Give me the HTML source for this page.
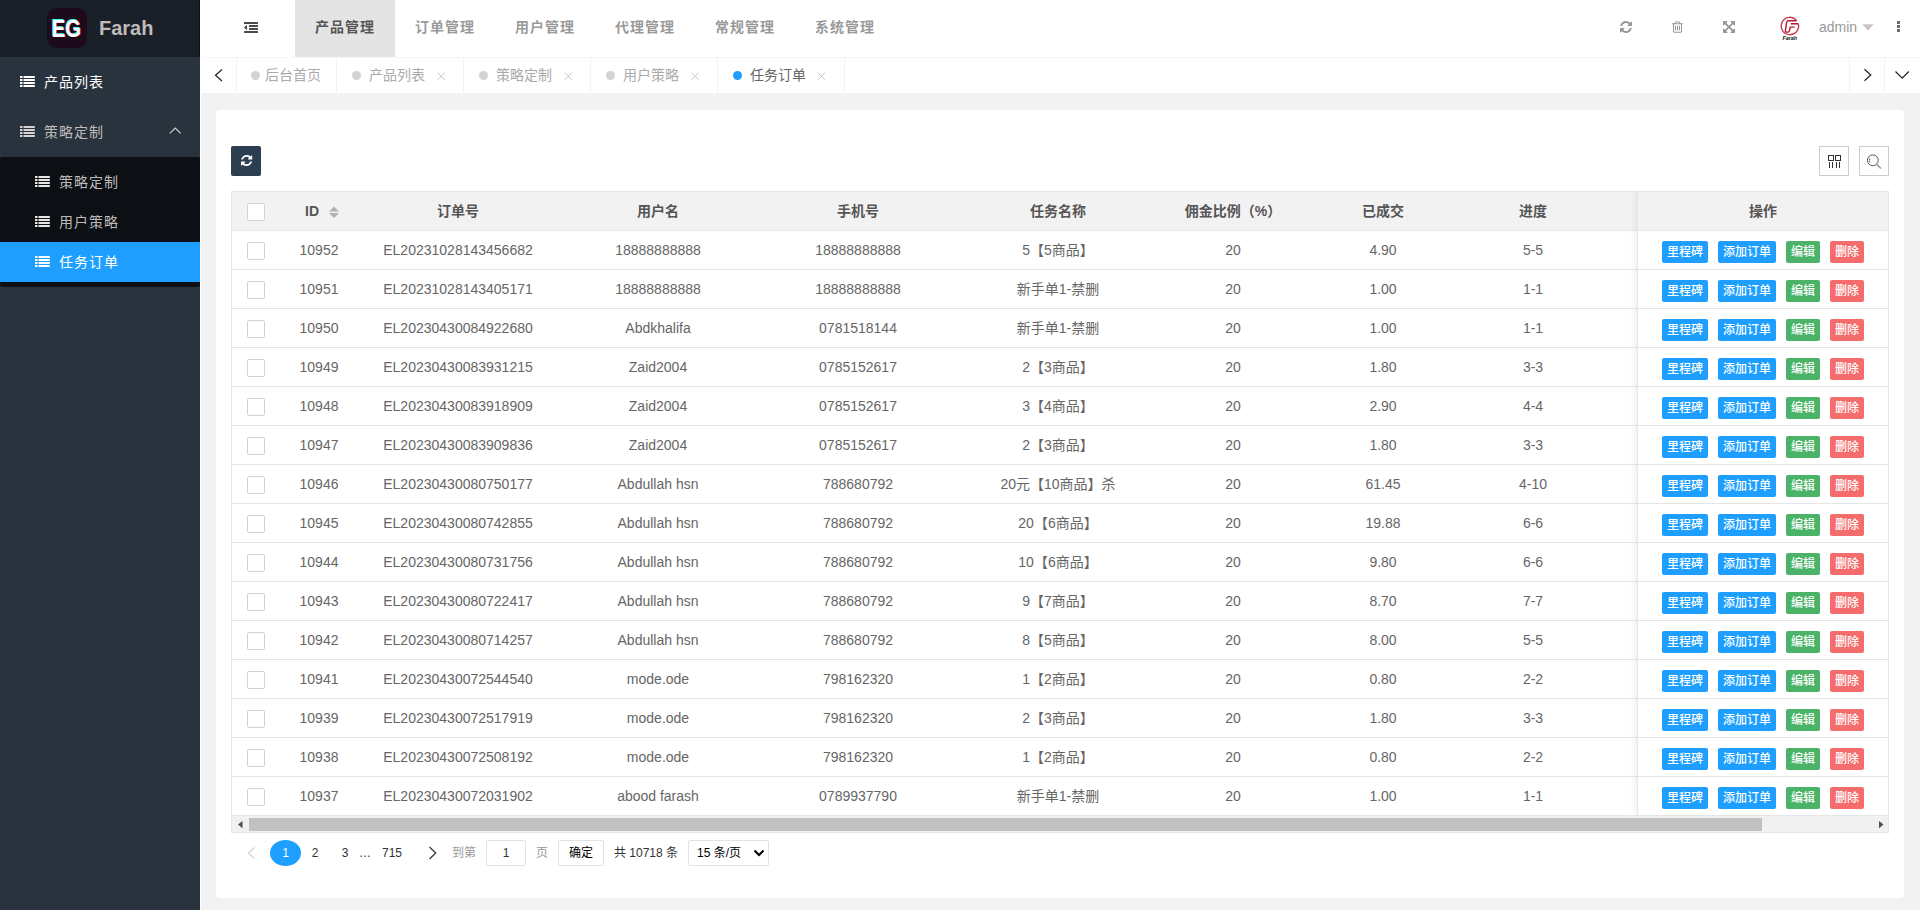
<!DOCTYPE html>
<html lang="zh-CN">
<head>
<meta charset="utf-8">
<title>Farah</title>
<style>
*{box-sizing:border-box}
html,body{margin:0;padding:0}
body{width:1920px;height:910px;overflow:hidden;background:#f2f2f2;font:14px/1 "Liberation Sans","Noto Sans CJK SC",sans-serif;color:#666;position:relative}
a{text-decoration:none;color:inherit}
.abs{position:absolute}
/* sidebar */
#side{position:absolute;left:0;top:0;width:200px;height:910px;background:#28333e;z-index:5}
#side:after{content:"";position:absolute;right:0;top:0;width:1px;height:57px;background:rgba(0,0,0,.45);z-index:9}
#strip{position:absolute;left:200px;top:0;width:1px;height:910px;background:#fff;z-index:4}
#logo{position:absolute;left:0;top:0;width:200px;height:57px;background:#192027}
#logo .img{position:absolute;left:47px;top:8px;width:40px;height:40px;border-radius:9px;background:#1d0b1c}
#logo .tt{position:absolute;left:99px;top:16px;font-size:20px;font-weight:bold;color:#bfbbbb;line-height:24px}
.mi{position:absolute;left:0;width:200px;color:#bfbbbb;font-size:14px;letter-spacing:1px}
.mi .t{position:absolute;top:0}
.ico-list{position:absolute;width:14px;height:10px}
.ico-list i{position:absolute;left:0;width:14px;height:2px;background:currentColor}
#child{position:absolute;left:0;top:157px;width:200px;height:130px;background:#0c0f13;border-radius:2px}
#act{position:absolute;left:0;top:242px;width:200px;height:40px;background:#1e9fff}
/* header */
#hd{position:absolute;left:200px;top:0;width:1720px;height:57px;background:#fff}
#hd .nav{position:absolute;top:0;height:57px;width:100px;text-align:center;line-height:55px;font-size:14px;letter-spacing:1px;font-weight:bold;color:rgba(107,107,107,.7)}
#hd .nav.on{background:#e4e4e4;color:#565656}
/* tabs */
#tb{position:absolute;left:201px;top:57px;width:1719px;height:36px;background:#fff;border-top:1px solid #f6f6f6}
#tb .sep{position:absolute;top:0;width:1px;height:35px;background:#f2f2f2}
#tb .tab{position:absolute;top:0;height:35px;line-height:35px;color:#aaa;font-size:14px;white-space:nowrap}
#tb .dot{position:absolute;top:13px;width:9px;height:9px;border-radius:50%;background:#d3d3d3}
#tb .tx{position:absolute;top:0}
/* card */
#card{position:absolute;left:216px;top:110px;width:1688px;height:788px;background:#fff;border-radius:4px}
#rf{position:absolute;left:15px;top:36px;width:30px;height:30px;background:#2d3e50;border-radius:2px}
.tbtn{position:absolute;top:36px;width:30px;height:30px;border:1px solid #ccc;background:#fff}
/* table */
#tbl{position:absolute;left:15px;top:81px;width:1658px;height:642px;border:1px solid #e6e6e6;overflow:hidden}
#th{position:absolute;left:0;top:0;width:1656px;height:39px;background:#f2f2f2;border-bottom:1px solid #e6e6e6;font-weight:bold;color:#555}
.tr{position:absolute;left:0;width:1656px;height:39px;border-bottom:1px solid #e6e6e6;color:#666}
.c{position:absolute;top:0;height:38px;line-height:38px;text-align:center;white-space:nowrap}
.c0{left:0;width:48px}
.c1{left:48px;width:78px}
.c2{left:126px;width:200px}
.c3{left:326px;width:200px}
.c4{left:526px;width:200px}
.c5{left:726px;width:200px}
.c6{left:926px;width:150px}
.c7{left:1076px;width:150px}
.c8{left:1226px;width:150px}
.cb{position:absolute;left:15px;top:11px;width:18px;height:18px;border:1px solid #d2d2d2;border-radius:2px;background:#fff}
.op{position:absolute;left:1405px;top:0;width:251px;height:38px;border-left:1px solid #e6e6e6;background:#fff;padding:10px 0 0 24px;font-size:0;white-space:nowrap}
.b{display:inline-block;height:22px;line-height:23.5px;overflow:hidden;font-weight:500;padding:0 5px;font-size:12px;color:#fff;border-radius:2px;margin-right:10px;vertical-align:top;letter-spacing:0}
.bn{background:#1e9fff}.bs{background:#4bb368}.bd{background:#f56c6c}
#fx{position:absolute;left:1405px;top:0;width:251px;height:624px;box-shadow:-1px 0 8px rgba(0,0,0,.08);pointer-events:none}
#sb{position:absolute;left:0;top:624px;width:1656px;height:16px;background:#f1f1f1}
#sb .thumb{position:absolute;left:17px;top:2px;width:1513px;height:13px;background:#c1c1c1}
/* pager */
#pg{position:absolute;left:15px;top:722px;height:42px;width:900px;font-size:12px;color:#333}
#pg span,#pg a{position:absolute;top:8px;height:26px;line-height:26px;white-space:nowrap}
svg{position:absolute;overflow:visible}
.lst{left:0;top:0}
</style>
</head>
<body>
<div id="side">
  <div id="logo"><div class="img"><svg style="left:0;top:0" width="40" height="40" viewBox="0 0 40 40" font-family="Liberation Sans, sans-serif" font-weight="bold" font-size="24.200px"><g transform="translate(4.700,28.700) scale(0.840,1)"><text x="-0.700" y="-0.600" fill="#4ff">EG</text><text x="0.700" y="0.700" fill="#ff3b5c">EG</text><text x="0" y="0" fill="#fff">EG</text></g></svg></div><div class="tt">Farah</div></div>
  <div id="child"></div><div id="act"></div>
  <svg style="left:19.5px;top:76px" width="16" height="11" viewBox="0 0 16 11" fill="#fff"><rect x="0" y="0" width="2.5" height="2"/><rect x="3.5" y="0" width="11.3" height="2"/><rect x="0" y="3" width="2.5" height="2"/><rect x="3.5" y="3" width="11.3" height="2"/><rect x="0" y="6" width="2.5" height="2"/><rect x="3.5" y="6" width="11.3" height="2"/><rect x="0" y="9" width="2.5" height="2"/><rect x="3.5" y="9" width="11.3" height="2"/></svg><svg style="left:19.5px;top:126px" width="16" height="11" viewBox="0 0 16 11" fill="#d6d2d2"><rect x="0" y="0" width="2.5" height="2"/><rect x="3.5" y="0" width="11.3" height="2"/><rect x="0" y="3" width="2.5" height="2"/><rect x="3.5" y="3" width="11.3" height="2"/><rect x="0" y="6" width="2.5" height="2"/><rect x="3.5" y="6" width="11.3" height="2"/><rect x="0" y="9" width="2.5" height="2"/><rect x="3.5" y="9" width="11.3" height="2"/></svg><svg style="left:34.5px;top:176px" width="16" height="11" viewBox="0 0 16 11" fill="#e9e6e6"><rect x="0" y="0" width="2.5" height="2"/><rect x="3.5" y="0" width="11.3" height="2"/><rect x="0" y="3" width="2.5" height="2"/><rect x="3.5" y="3" width="11.3" height="2"/><rect x="0" y="6" width="2.5" height="2"/><rect x="3.5" y="6" width="11.3" height="2"/><rect x="0" y="9" width="2.5" height="2"/><rect x="3.5" y="9" width="11.3" height="2"/></svg><svg style="left:34.5px;top:216px" width="16" height="11" viewBox="0 0 16 11" fill="#e9e6e6"><rect x="0" y="0" width="2.5" height="2"/><rect x="3.5" y="0" width="11.3" height="2"/><rect x="0" y="3" width="2.5" height="2"/><rect x="3.5" y="3" width="11.3" height="2"/><rect x="0" y="6" width="2.5" height="2"/><rect x="3.5" y="6" width="11.3" height="2"/><rect x="0" y="9" width="2.5" height="2"/><rect x="3.5" y="9" width="11.3" height="2"/></svg><svg style="left:34.5px;top:256px" width="16" height="11" viewBox="0 0 16 11" fill="#fff"><rect x="0" y="0" width="2.5" height="2"/><rect x="3.5" y="0" width="11.3" height="2"/><rect x="0" y="3" width="2.5" height="2"/><rect x="3.5" y="3" width="11.3" height="2"/><rect x="0" y="6" width="2.5" height="2"/><rect x="3.5" y="6" width="11.3" height="2"/><rect x="0" y="9" width="2.5" height="2"/><rect x="3.5" y="9" width="11.3" height="2"/></svg><svg style="left:165px;top:120px" width="20" height="20" viewBox="165 120 20 20" fill="none" stroke="#d2cece" stroke-width="1.150"><polyline points="169.8,133.3 175.2,128 180.7,133.3"/></svg>
  <div class="mi" style="top:57px;height:50px;line-height:50px;color:#fff"><span class="t" style="left:44px">产品列表</span></div>
  <div class="mi" style="top:107px;height:50px;line-height:50px"><span class="t" style="left:44px">策略定制</span></div>
  <div class="mi" style="top:162px;height:40px;line-height:40px"><span class="t" style="left:59px">策略定制</span></div>
  <div class="mi" style="top:202px;height:40px;line-height:40px"><span class="t" style="left:59px">用户策略</span></div>
  <div class="mi" style="top:242px;height:40px;line-height:40px;color:#fff"><span class="t" style="left:59px">任务订单</span></div>
</div>
<div id="strip"></div>
<div id="hd">
  <svg style="left:44px;top:22px" width="14" height="11" viewBox="0 0 14 11" fill="#4a4a4a"><rect x="0" y="0" width="14" height="2" rx=".5"/><rect x="5" y="3" width="9" height="2" rx=".5"/><rect x="5" y="6" width="9" height="2" rx=".5"/><rect x="0" y="9" width="14" height="2" rx=".5"/><path d="M0 5.500L3 2.800V8.200z"/></svg><svg style="left:1420px;top:20.200px" width="12" height="14" viewBox="0 0 1536 1792" fill="#979797"><path d="M1511 1056q0 5-1 7-64 268-268 434.500T764 1664q-146 0-282.500-55T238 1452l-129 129q-19 19-45 19t-45-19-19-45V1088q0-26 19-45t45-19h448q26 0 45 19t19 45-19 45l-137 137q71 66 161 102t187 36q134 0 250-65t186-179q11-17 53-117 8-23 30-23h192q13 0 22.500 9.500t9.500 22.500zm25-800v448q0 26-19 45t-45 19h-448q-26 0-45-19t-19-45 19-45l138-138Q969 384 768 384q-134 0-250 65T332 628q-11 17-53 117-8 23-30 23H50q-13 0-22.500-9.500T18 736v-7q65-268 270-434.500T768 128q146 0 284 55.500T1297 340l130-129q19-19 45-19t45 19 19 45z"/></svg><svg style="left:1472px;top:20.300px" width="11" height="13.200" preserveAspectRatio="none" viewBox="0 0 1408 1792" fill="#979797"><path fill-rule="evenodd" d="M512 800v576q0 14-9 23t-23 9h-64q-14 0-23-9t-9-23V800q0-14 9-23t23-9h64q14 0 23 9t9 23zm256 0v576q0 14-9 23t-23 9h-64q-14 0-23-9t-9-23V800q0-14 9-23t23-9h64q14 0 23 9t9 23zm256 0v576q0 14-9 23t-23 9h-64q-14 0-23-9t-9-23V800q0-14 9-23t23-9h64q14 0 23 9t9 23zm128 724V576H256v948q0 22 7 40.500t14.500 27 10.500 8.500h832q3 0 10.500-8.500t14.500-27 7-40.500zM480 448h448l-48-117q-7-9-17-11H546q-10 2-17 11zm928 32v64q0 14-9 23t-23 9h-96v948q0 83-47 143.500t-113 60.500H288q-66 0-113-58.500T128 1528V576H32q-14 0-23-9t-9-23v-64q0-14 9-23t23-9h309l70-167q15-37 54-63t79-26h320q40 0 79 26t54 63l70 167h309q14 0 23 9t9 23z"/></svg><svg style="left:1523px;top:21px" width="12" height="12" viewBox="0 0 1536 1536" fill="#979797"><path d="M1283 413L928 768l355 355 144-144q29-31 70-14 39 17 39 59v448q0 26-19 45t-45 19h-448q-42 0-59-40-17-39 14-69l144-144-355-355-355 355 144 144q31 30 14 69-17 40-59 40H64q-26 0-45-19t-19-45v-448q0-42 40-59 39-17 69 14l144 144 355-355-355-355-144 144q-19 19-45 19-12 0-24-5-40-17-40-59V64q0-26 19-45T64 0h448q42 0 59 40 17 39-14 69L413 253l355 355 355-355-144-144q-31-30-14-69 17-40 59-40h448q26 0 45 19t19 45v448q0 42-39 59-13 5-25 5-26 0-45-19z"/></svg><svg style="left:1579px;top:15px" width="22" height="27" viewBox="1779 15 22 27"><path d="M1796.300 20.100A8.700 8.700 0 1 0 1798.300 23.700" fill="none" stroke="#c83a50" stroke-width="1.400"/><path d="M1796.800 20.700H1788.600Q1786.900 20.700 1786.600 22.500L1785.400 30.900Q1785.300 32.100 1786.500 32.100H1788.100Q1789.200 32.100 1789.400 30.900L1790.200 27.100H1794.600M1790.800 23.700H1798.300" fill="none" stroke="#b9152e" stroke-width="1.400" stroke-linejoin="round"/><text x="1789.800" y="39.900" text-anchor="middle" font-family="Liberation Sans, sans-serif" font-weight="bold" font-style="italic" font-size="5.400px" fill="#111">Farah</text></svg><svg style="left:1662px;top:24px" width="12" height="7" viewBox="0 0 12 7" fill="#c6c6c6"><path d="M0.300 0.300H11.700L6 6.400z"/></svg><svg style="left:1697px;top:21px" width="3" height="11" viewBox="0 0 3 11" fill="#6b6b6b"><rect x="0" y="0" width="3" height="3"/><rect x="0" y="4" width="3" height="3"/><rect x="0" y="8" width="3" height="3"/></svg>
  <div class="nav on" style="left:95px">产品管理</div>
  <div class="nav" style="left:195px">订单管理</div>
  <div class="nav" style="left:295px">用户管理</div>
  <div class="nav" style="left:395px">代理管理</div>
  <div class="nav" style="left:495px">常规管理</div>
  <div class="nav" style="left:595px">系统管理</div>
  <div class="abs" style="left:1619px;top:0;line-height:55px;color:#999;font-size:14px">admin</div>
</div>
<div id="tb">
  <svg style="left:0;top:0" width="1720" height="35" viewBox="201 58 1720 35" fill="none" stroke="#222" stroke-width="1.200"><polyline points="222,69.500 215.500,75.200 222,81"/><polyline points="1864.500,69.300 1870.800,75 1864.500,80.800"/><polyline points="1895.500,71.500 1902.200,78.200 1908.800,71.500"/><path d="M437.7 72.700l7.200 7.200m0 -7.200l-7.200 7.200" stroke="#c6c6c6" stroke-width="1"/><path d="M564.7 72.700l7.200 7.200m0 -7.200l-7.200 7.200" stroke="#c6c6c6" stroke-width="1"/><path d="M691.7 72.700l7.200 7.200m0 -7.200l-7.200 7.200" stroke="#c6c6c6" stroke-width="1"/><path d="M817.9 72.700l7.200 7.200m0 -7.200l-7.200 7.200" stroke="#c6c6c6" stroke-width="1"/></svg>
  <div class="sep" style="left:35px"></div>
  <div class="sep" style="left:135px"></div>
  <div class="sep" style="left:262px"></div>
  <div class="sep" style="left:389px"></div>
  <div class="sep" style="left:516px"></div>
  <div class="sep" style="left:643px"></div>
  <div class="sep" style="left:1648px"></div>
  <div class="sep" style="left:1683px"></div>
  <div class="tab" style="left:35px;width:100px"><i class="dot" style="left:15px"></i><span class="tx" style="left:29px">后台首页</span></div>
  <div class="tab" style="left:135px;width:127px"><i class="dot" style="left:16px"></i><span class="tx" style="left:33px">产品列表</span></div>
  <div class="tab" style="left:262px;width:127px"><i class="dot" style="left:16px"></i><span class="tx" style="left:33px">策略定制</span></div>
  <div class="tab" style="left:389px;width:127px"><i class="dot" style="left:16px"></i><span class="tx" style="left:33px">用户策略</span></div>
  <div class="tab" style="left:516px;width:127px;color:#666"><i class="dot" style="left:16px;background:#1e9fff"></i><span class="tx" style="left:33px">任务订单</span></div>
</div>
<div id="card">
  <div id="rf"><svg style="left:9.650px;top:8px" width="11.200" height="13" viewBox="0 0 1536 1792" fill="#fff"><path d="M1511 1056q0 5-1 7-64 268-268 434.500T764 1664q-146 0-282.500-55T238 1452l-129 129q-19 19-45 19t-45-19-19-45V1088q0-26 19-45t45-19h448q26 0 45 19t19 45-19 45l-137 137q71 66 161 102t187 36q134 0 250-65t186-179q11-17 53-117 8-23 30-23h192q13 0 22.500 9.500t9.500 22.500zm25-800v448q0 26-19 45t-45 19h-448q-26 0-45-19t-19-45 19-45l138-138Q969 384 768 384q-134 0-250 65T332 628q-11 17-53 117-8 23-30 23H50q-13 0-22.500-9.500T18 736v-7q65-268 270-434.500T768 128q146 0 284 55.500T1297 340l130-129q19-19 45-19t45 19 19 45z"/></svg></div>
  <div class="tbtn" style="left:1603px"><svg style="left:0;top:0" width="28" height="28" viewBox="1820 147 28 28" fill="none" stroke="#333" stroke-width="1"><rect x="1828.500" y="155.500" width="5" height="5"/><rect x="1835.500" y="155.500" width="5" height="5"/><path d="M1829.500 162v6M1832.500 162v6M1836.500 162v6M1839.500 162v6"/></svg></div>
  <div class="tbtn" style="left:1643px"><svg style="left:0;top:0" width="28" height="28" viewBox="1860 147 28 28" fill="none" stroke="#555" stroke-width="1"><circle cx="1872.800" cy="160.300" r="5.400"/><path d="M1869.800 158.200q-.9 2 0 4.200" stroke-width=".8"/><path d="M1877 164.700l3.900 3.800" stroke-width="1.700" stroke="#999"/></svg></div>
  <div id="tbl">
    <div id="th">
      <div class="c c0"><i class="cb"></i></div>
      <div class="c c1"><span style="position:absolute;left:25px;top:0">ID</span><svg style="left:49px;top:14px" width="10" height="13" viewBox="0 0 10 13" fill="#b2b2b2"><path d="M0 5.500L5 0.500L10 5.500z"/><path d="M0 7L5 12L10 7z"/></svg></div>
      <div class="c c2">订单号</div>
      <div class="c c3">用户名</div>
      <div class="c c4">手机号</div>
      <div class="c c5">任务名称</div>
      <div class="c c6">佣金比例（%）</div>
      <div class="c c7">已成交</div>
      <div class="c c8">进度</div>
      <div class="op" style="background:#f2f2f2;padding:0;text-align:center;font-size:14px;line-height:38px">操作</div>
    </div>
    <div id="tb-body">
<div class="tr" style="top:39px"><div class="c c0"><i class="cb"></i></div><div class="c c1">10952</div><div class="c c2">EL20231028143456682</div><div class="c c3">18888888888</div><div class="c c4">18888888888</div><div class="c c5">5【5商品】</div><div class="c c6">20</div><div class="c c7">4.90</div><div class="c c8">5-5</div><div class="op"><a class="b bn">里程碑</a><a class="b bn">添加订单</a><a class="b bs">编辑</a><a class="b bd">删除</a></div></div>
<div class="tr" style="top:78px"><div class="c c0"><i class="cb"></i></div><div class="c c1">10951</div><div class="c c2">EL20231028143405171</div><div class="c c3">18888888888</div><div class="c c4">18888888888</div><div class="c c5">新手单1-禁删</div><div class="c c6">20</div><div class="c c7">1.00</div><div class="c c8">1-1</div><div class="op"><a class="b bn">里程碑</a><a class="b bn">添加订单</a><a class="b bs">编辑</a><a class="b bd">删除</a></div></div>
<div class="tr" style="top:117px"><div class="c c0"><i class="cb"></i></div><div class="c c1">10950</div><div class="c c2">EL20230430084922680</div><div class="c c3">Abdkhalifa</div><div class="c c4">0781518144</div><div class="c c5">新手单1-禁删</div><div class="c c6">20</div><div class="c c7">1.00</div><div class="c c8">1-1</div><div class="op"><a class="b bn">里程碑</a><a class="b bn">添加订单</a><a class="b bs">编辑</a><a class="b bd">删除</a></div></div>
<div class="tr" style="top:156px"><div class="c c0"><i class="cb"></i></div><div class="c c1">10949</div><div class="c c2">EL20230430083931215</div><div class="c c3">Zaid2004</div><div class="c c4">0785152617</div><div class="c c5">2【3商品】</div><div class="c c6">20</div><div class="c c7">1.80</div><div class="c c8">3-3</div><div class="op"><a class="b bn">里程碑</a><a class="b bn">添加订单</a><a class="b bs">编辑</a><a class="b bd">删除</a></div></div>
<div class="tr" style="top:195px"><div class="c c0"><i class="cb"></i></div><div class="c c1">10948</div><div class="c c2">EL20230430083918909</div><div class="c c3">Zaid2004</div><div class="c c4">0785152617</div><div class="c c5">3【4商品】</div><div class="c c6">20</div><div class="c c7">2.90</div><div class="c c8">4-4</div><div class="op"><a class="b bn">里程碑</a><a class="b bn">添加订单</a><a class="b bs">编辑</a><a class="b bd">删除</a></div></div>
<div class="tr" style="top:234px"><div class="c c0"><i class="cb"></i></div><div class="c c1">10947</div><div class="c c2">EL20230430083909836</div><div class="c c3">Zaid2004</div><div class="c c4">0785152617</div><div class="c c5">2【3商品】</div><div class="c c6">20</div><div class="c c7">1.80</div><div class="c c8">3-3</div><div class="op"><a class="b bn">里程碑</a><a class="b bn">添加订单</a><a class="b bs">编辑</a><a class="b bd">删除</a></div></div>
<div class="tr" style="top:273px"><div class="c c0"><i class="cb"></i></div><div class="c c1">10946</div><div class="c c2">EL20230430080750177</div><div class="c c3">Abdullah hsn</div><div class="c c4">788680792</div><div class="c c5">20元【10商品】杀</div><div class="c c6">20</div><div class="c c7">61.45</div><div class="c c8">4-10</div><div class="op"><a class="b bn">里程碑</a><a class="b bn">添加订单</a><a class="b bs">编辑</a><a class="b bd">删除</a></div></div>
<div class="tr" style="top:312px"><div class="c c0"><i class="cb"></i></div><div class="c c1">10945</div><div class="c c2">EL20230430080742855</div><div class="c c3">Abdullah hsn</div><div class="c c4">788680792</div><div class="c c5">20【6商品】</div><div class="c c6">20</div><div class="c c7">19.88</div><div class="c c8">6-6</div><div class="op"><a class="b bn">里程碑</a><a class="b bn">添加订单</a><a class="b bs">编辑</a><a class="b bd">删除</a></div></div>
<div class="tr" style="top:351px"><div class="c c0"><i class="cb"></i></div><div class="c c1">10944</div><div class="c c2">EL20230430080731756</div><div class="c c3">Abdullah hsn</div><div class="c c4">788680792</div><div class="c c5">10【6商品】</div><div class="c c6">20</div><div class="c c7">9.80</div><div class="c c8">6-6</div><div class="op"><a class="b bn">里程碑</a><a class="b bn">添加订单</a><a class="b bs">编辑</a><a class="b bd">删除</a></div></div>
<div class="tr" style="top:390px"><div class="c c0"><i class="cb"></i></div><div class="c c1">10943</div><div class="c c2">EL20230430080722417</div><div class="c c3">Abdullah hsn</div><div class="c c4">788680792</div><div class="c c5">9【7商品】</div><div class="c c6">20</div><div class="c c7">8.70</div><div class="c c8">7-7</div><div class="op"><a class="b bn">里程碑</a><a class="b bn">添加订单</a><a class="b bs">编辑</a><a class="b bd">删除</a></div></div>
<div class="tr" style="top:429px"><div class="c c0"><i class="cb"></i></div><div class="c c1">10942</div><div class="c c2">EL20230430080714257</div><div class="c c3">Abdullah hsn</div><div class="c c4">788680792</div><div class="c c5">8【5商品】</div><div class="c c6">20</div><div class="c c7">8.00</div><div class="c c8">5-5</div><div class="op"><a class="b bn">里程碑</a><a class="b bn">添加订单</a><a class="b bs">编辑</a><a class="b bd">删除</a></div></div>
<div class="tr" style="top:468px"><div class="c c0"><i class="cb"></i></div><div class="c c1">10941</div><div class="c c2">EL20230430072544540</div><div class="c c3">mode.ode</div><div class="c c4">798162320</div><div class="c c5">1【2商品】</div><div class="c c6">20</div><div class="c c7">0.80</div><div class="c c8">2-2</div><div class="op"><a class="b bn">里程碑</a><a class="b bn">添加订单</a><a class="b bs">编辑</a><a class="b bd">删除</a></div></div>
<div class="tr" style="top:507px"><div class="c c0"><i class="cb"></i></div><div class="c c1">10939</div><div class="c c2">EL20230430072517919</div><div class="c c3">mode.ode</div><div class="c c4">798162320</div><div class="c c5">2【3商品】</div><div class="c c6">20</div><div class="c c7">1.80</div><div class="c c8">3-3</div><div class="op"><a class="b bn">里程碑</a><a class="b bn">添加订单</a><a class="b bs">编辑</a><a class="b bd">删除</a></div></div>
<div class="tr" style="top:546px"><div class="c c0"><i class="cb"></i></div><div class="c c1">10938</div><div class="c c2">EL20230430072508192</div><div class="c c3">mode.ode</div><div class="c c4">798162320</div><div class="c c5">1【2商品】</div><div class="c c6">20</div><div class="c c7">0.80</div><div class="c c8">2-2</div><div class="op"><a class="b bn">里程碑</a><a class="b bn">添加订单</a><a class="b bs">编辑</a><a class="b bd">删除</a></div></div>
<div class="tr" style="top:585px"><div class="c c0"><i class="cb"></i></div><div class="c c1">10937</div><div class="c c2">EL20230430072031902</div><div class="c c3">abood farash</div><div class="c c4">0789937790</div><div class="c c5">新手单1-禁删</div><div class="c c6">20</div><div class="c c7">1.00</div><div class="c c8">1-1</div><div class="op"><a class="b bn">里程碑</a><a class="b bn">添加订单</a><a class="b bs">编辑</a><a class="b bd">删除</a></div></div>
    </div>
    <div id="fx"></div>
    <div id="sb"><div class="thumb"></div><svg style="left:0;top:0" width="1656" height="15" viewBox="0 0 1656 15" fill="#505050"><path d="M6 8.600L10.500 5v7.300z"/><path d="M1651.500 8.600L1647 5v7.300z"/></svg></div>
  </div>
  <div id="pg">
    <svg style="left:0;top:0" width="300" height="42" viewBox="231 832 300 42" fill="none" stroke-width="1.200"><polyline points="254.500,847.500 248.500,853 254.500,858.500" stroke="#d2d2d2"/><polyline points="429.500,847 435.800,853 429.500,859" stroke="#333"/></svg>
    <span style="left:39px;color:#fff;width:31px;text-align:center;background:#1e9fff;border-radius:50%">1</span>
    <span style="left:69px;width:30px;text-align:center">2</span>
    <span style="left:99px;width:30px;text-align:center">3</span>
    <span style="left:119px;width:30px;text-align:center">…</span>
    <span style="left:146px;width:30px;text-align:center">715</span>
    <span style="left:221px;color:#999">到第</span>
    <span style="left:255px;width:40px;border:1px solid #e2e2e2;text-align:center;border-radius:2px;line-height:24px">1</span>
    <span style="left:305px;color:#999">页</span>
    <span style="left:327px;width:46px;border:1px solid #e2e2e2;text-align:center;border-radius:2px;line-height:25px;color:#000">确定</span>
    <span style="left:383px">共 10718 条</span>
    <span style="left:457px;width:81px;border:1px solid #e2e2e2;border-radius:2px;padding-left:8px;line-height:24px;color:#000">15 条/页<svg style="left:64px;top:8px" width="12" height="8" viewBox="0 0 12 8" fill="none" stroke="#000" stroke-width="2"><polyline points="1.500,1.500 6,6 10.500,1.500"/></svg></span>
  </div>
</div>
</body>
</html>
